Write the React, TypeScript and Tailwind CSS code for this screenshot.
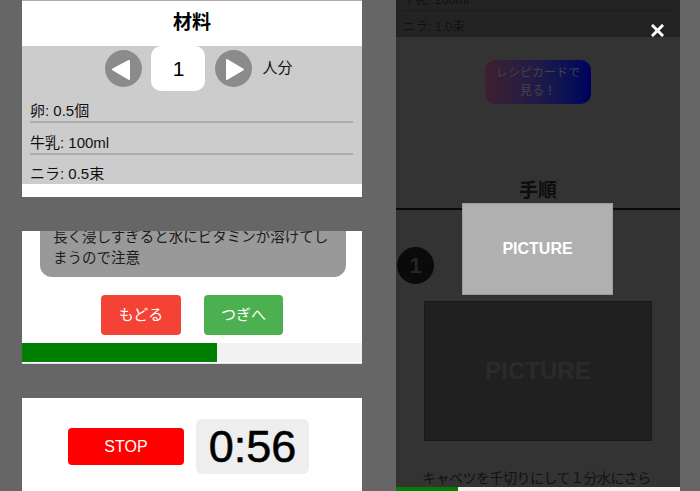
import React from 'react';

const ArrowButton: React.FC<{ dir: 'left' | 'right' }> = ({ dir }) => (
  <svg width="37" height="37" viewBox="0 0 37 37" className="shrink-0">
    <circle cx="18.5" cy="18.5" r="18.5" fill="#8b8b8b" />
    {dir === 'left' ? (
      <polygon points="8,19.5 24,11 24,29" fill="#fff" stroke="#fff" strokeWidth="2" strokeLinejoin="round" />
    ) : (
      <polygon points="12,10 12,29 28,19.5" fill="#fff" stroke="#fff" strokeWidth="2" strokeLinejoin="round" />
    )}
  </svg>
);

const ingredients = ['卵: 0.5個', '牛乳: 100ml', 'ニラ: 0.5束'];

const IngredientPanel: React.FC = () => (
  <div className="shrink-0 h-[197px] bg-white border-t border-[#a9a9a9] flex flex-col">
    <div className="shrink-0 h-[45px] flex items-center justify-center text-[19px] font-bold text-black">材料</div>
    <div className="shrink-0 h-[138px] bg-[#cccccc] flex flex-col">
      <div className="shrink-0 h-[45px] flex items-center justify-center pl-[14px]">
        <ArrowButton dir="left" />
        <div className="ml-[9px] w-[54px] h-[45px] rounded-[10px] bg-white flex items-center justify-center text-[21px] text-black">
          1
        </div>
        <div className="ml-[10px]">
          <ArrowButton dir="right" />
        </div>
        <span className="ml-[10px] text-[15px] text-[#111]">人分</span>
      </div>
      {ingredients.map((item, i) => (
        <div
          key={item}
          className={
            i < ingredients.length - 1
              ? 'shrink-0 ml-[8px] mr-[9px] h-[32px] flex items-end border-b-2 border-[#ababab] text-[15px] leading-[20px] text-[#111]'
              : 'shrink-0 ml-[8px] mr-[9px] h-[29px] flex items-end text-[15px] leading-[20px] text-[#111]'
          }
        >
          {item}
        </div>
      ))}
    </div>
  </div>
);

const StepPanel: React.FC = () => (
  <div className="shrink-0 h-[133px] bg-white overflow-hidden flex flex-col border-b border-[#dde2ea]">
    <div className="shrink-0 -mt-[4px] ml-[18px] mr-[16px] bg-[#999999] rounded-b-[12px] px-[13px] pb-[8px] text-[14.5px] leading-[21px] text-[#1c1c1c]">
      長く浸しすぎると水にビタミンが溶けてし
      <br />
      まうので注意
    </div>
    <div className="shrink-0 mt-[18px] flex justify-center gap-[23px]">
      <button className="w-[80px] h-[40px] rounded-[4px] bg-[#f44336] text-white text-[15px]">もどる</button>
      <button className="w-[79px] h-[40px] rounded-[4px] bg-[#4caf50] text-white text-[15px]">つぎへ</button>
    </div>
    <div className="shrink-0 mt-[8px] h-[19px] bg-[#f2f2f2]">
      <div className="w-[195px] h-full bg-[#008000]" />
    </div>
  </div>
);

const TimerPanel: React.FC = () => (
  <div className="shrink-0 h-[93px] bg-white flex justify-center items-start pt-[21px] pr-[7px] gap-[12px]">
    <button className="mt-[9px] w-[116px] h-[37px] rounded-[4px] bg-[#ff0000] text-white text-[16px]">STOP</button>
    <div className="w-[113px] h-[55px] rounded-[6px] bg-[#eeeeee] flex items-center justify-center text-[45px] text-black [-webkit-text-stroke:0.6px_black]">
      0:56
    </div>
  </div>
);

const PhonePreview: React.FC = () => (
  <div className="relative w-[284px] h-[491px] overflow-hidden bg-[#333333] flex flex-col">
    <div className="shrink-0 -mt-[20px] bg-[#232323] flex flex-col">
      <div className="shrink-0 ml-[7px] mr-[8px] h-[31px] flex items-end border-b border-[#1c1c1c] text-[12.5px] leading-[20px] text-[#111]">
        牛乳: 200ml
      </div>
      <div className="shrink-0 ml-[7px] mr-[8px] h-[26px] flex items-end text-[12.5px] leading-[20px] text-[#111]">
        ニラ: 1.0束
      </div>
    </div>
    <div className="shrink-0 mt-[23px] self-center w-[106px] h-[44px] rounded-[10px] bg-gradient-to-r from-[#3e1f2f] to-[#00005e] flex flex-col items-center justify-center text-[12px] leading-[18px] text-[#444]">
      <span>レシピカードで</span>
      <span>見る！</span>
    </div>
    <div className="shrink-0 mt-[75px] pb-[5px] border-b-2 border-[#0a0a0a] text-center text-[19px] leading-[24px] font-bold text-[#0d0d0d]">
      手順
    </div>
    <div className="shrink-0 mt-[37px] ml-[1px] w-[37px] h-[37px] rounded-full bg-[#0a0a0a] flex items-center justify-center text-[22px] font-bold text-[#262626]">
      1
    </div>
    <div className="shrink-0 mt-[17px] mx-auto w-[228px] h-[140px] bg-[#202020] border border-[#191919] flex items-center justify-center text-[24px] font-bold text-[#2b2b2b]">
      PICTURE
    </div>
    <p className="shrink-0 mt-[27px] mx-auto w-[232px] text-[14px] leading-[20px] tracking-[-0.5px] text-[#121212]">
      キャベツを千切りにして１分水にさらす
    </p>

    {/* modal layer */}
    <svg className="absolute left-[255px] top-[24px]" width="13" height="13" viewBox="0 0 13 13">
      <path d="M2 2 L11 11 M11 2 L2 11" stroke="#fff" strokeWidth="3" strokeLinecap="square" />
    </svg>
    <div className="absolute left-[66px] top-[203px] w-[151px] h-[92px] bg-[#b0b0b0] border border-[#9c9c9c] flex items-center justify-center text-[16px] font-bold text-white">
      PICTURE
    </div>
    <div className="absolute left-0 right-0 bottom-0 h-[4px] bg-[#f2f2f2]">
      <div className="w-[62px] h-full bg-[#008000]" />
    </div>
  </div>
);

export default function App() {
  return (
    <div className="w-[700px] h-[491px] overflow-hidden bg-[#666666] flex font-['Liberation_Sans','Noto_Sans_CJK_JP',sans-serif]">
      <div className="ml-[22px] w-[340px] flex flex-col gap-[34px]">
        <IngredientPanel />
        <StepPanel />
        <TimerPanel />
      </div>
      <div className="ml-[34px]">
        <PhonePreview />
      </div>
    </div>
  );
}
